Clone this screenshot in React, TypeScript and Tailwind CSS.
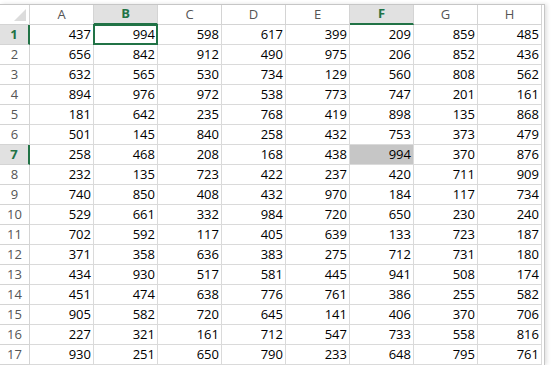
const cols = ["A", "B", "C", "D", "E", "F", "G", "H"];

const data: number[][] = [
  [437, 994, 598, 617, 399, 209, 859, 485],
  [656, 842, 912, 490, 975, 206, 852, 436],
  [632, 565, 530, 734, 129, 560, 808, 562],
  [894, 976, 972, 538, 773, 747, 201, 161],
  [181, 642, 235, 768, 419, 898, 135, 868],
  [501, 145, 840, 258, 432, 753, 373, 479],
  [258, 468, 208, 168, 438, 994, 370, 876],
  [232, 135, 723, 422, 237, 420, 711, 909],
  [740, 850, 408, 432, 970, 184, 117, 734],
  [529, 661, 332, 984, 720, 650, 230, 240],
  [702, 592, 117, 405, 639, 133, 723, 187],
  [371, 358, 636, 383, 275, 712, 731, 180],
  [434, 930, 517, 581, 445, 941, 508, 174],
  [451, 474, 638, 776, 761, 386, 255, 582],
  [905, 582, 720, 645, 141, 406, 370, 706],
  [227, 321, 161, 712, 547, 733, 558, 816],
  [930, 251, 650, 790, 233, 648, 795, 761],
];

const selectedCols = [1, 5];
const selectedRows = [0, 6];

export default function App() {
  return (
    <div
      className="h-[365px] w-[557px] overflow-hidden bg-white pt-[4px]"
      style={{ fontFamily: '"Open Sans", "Liberation Sans", sans-serif' }}
    >
      <div className="w-[545px] border-t border-r border-[#c6c6c6] shadow-[2px_0_4px_rgba(0,0,0,0.12)]">
        {/* header row */}
        <div className="grid grid-cols-[30px_repeat(8,64px)]">
          <div className="flex h-[20px] items-end justify-end border-r border-b border-[#d4d4d4] bg-white pr-[3px] pb-[3px]">
            <svg width="12" height="12" viewBox="0 0 12 12">
              <polygon points="12,0 12,12 0,12" fill="#dcdcdc" />
            </svg>
          </div>
          {cols.map((c, i) => {
            const sel = selectedCols.includes(i);
            return (
              <div
                key={c}
                className={
                  "flex h-[20px] items-center justify-center border-r text-[13px] " +
                  (sel
                    ? "border-b-2 border-r-[#d4d4d4] border-b-[#217346] bg-[#e1e1e1] font-bold text-[#217346]"
                    : "border-b border-[#d4d4d4] bg-white text-[#555]")
                }
              >
                {c}
              </div>
            );
          })}
        </div>

        {data.map((row, r) => {
          const rsel = selectedRows.includes(r);
          return (
            <div key={r} className="grid grid-cols-[30px_repeat(8,64px)]">
              <div
                className={
                  "flex h-[20px] items-center justify-center border-b border-[#d4d4d4] text-[13px] " +
                  (rsel
                    ? "border-r-2 border-r-[#217346] bg-[#e1e1e1] font-bold text-[#217346]"
                    : "border-r bg-white text-[#555]")
                }
              >
                {r + 1}
              </div>
              {row.map((v, c) => {
                const active = r === 0 && c === 1;
                const grey = r === 6 && c === 5;
                return (
                  <div
                    key={c}
                    className={
                      "relative flex h-[20px] items-center justify-end border-r border-b border-[#dadada] pr-[2px] text-[13px] text-black " +
                      (grey ? "bg-[#c6c6c6]" : "bg-white")
                    }
                  >
                    {v}
                    {active && (
                      <div className="absolute -top-[1px] -left-[1px] h-[21px] w-[65px] border-2 border-[#217346]" />
                    )}
                  </div>
                );
              })}
            </div>
          );
        })}
      </div>
    </div>
  );
}
